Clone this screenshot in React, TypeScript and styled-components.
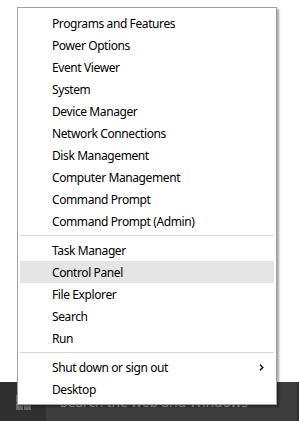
import React from 'react';
import styled, { createGlobalStyle } from 'styled-components';

const GlobalStyle = createGlobalStyle`
  html, body {
    margin: 0;
    padding: 0;
    background: #ffffff;
  }
  body {
    font-family: "Noto Sans", "Liberation Sans", sans-serif;
  }
`;

// #region styled
const Screen = styled.div`
  display: flex;
  flex-direction: column;
  height: 421px;
  overflow: hidden;
  position: relative;
  width: 299px;
`;

const Desk = styled.div`
  background: #ffffff;
  flex-grow: 1;
`;

const Taskbar = styled.div`
  background: #303030;
  display: flex;
  flex-direction: row;
  height: 39px;
`;

const StartButton = styled.div`
  align-items: center;
  box-sizing: border-box;
  display: flex;
  justify-content: center;
  padding-top: 2px;
  width: 46px;
`;

const SearchBox = styled.div`
  align-items: center;
  background: #3d3d3d;
  color: #a8a8a8;
  display: flex;
  flex-grow: 1;
  font-size: 14px;
  letter-spacing: -0.2px;
  margin-right: 2px;
  overflow: hidden;
  padding-left: 14px;
  white-space: nowrap;
`;

const Menu = styled.div`
  background: #ffffff;
  border: 1px solid #a0a0a0;
  box-shadow: 2px 2px 2px rgba(0, 0, 0, 0.35);
  box-sizing: border-box;
  left: 17px;
  padding: 4px 2px;
  position: absolute;
  top: 7px;
  width: 260px;
`;

const Item = styled.div<{ $active?: boolean }>`
  align-items: center;
  background: ${(p) => (p.$active ? '#e5e5e5' : 'transparent')};
  color: #000000;
  display: flex;
  font-size: 12px;
  height: 22px;
  letter-spacing: -0.4px;
  padding-left: 32px;
  padding-right: 10px;
`;

const Label = styled.span`
  flex-grow: 1;
`;

const Separator = styled.div`
  border-top: 1px solid #d7d7d7;
  margin: 3px 0;
`;
// #endregion

const groups: string[][] = [
  [
    'Programs and Features',
    'Power Options',
    'Event Viewer',
    'System',
    'Device Manager',
    'Network Connections',
    'Disk Management',
    'Computer Management',
    'Command Prompt',
    'Command Prompt (Admin)',
  ],
  ['Task Manager', 'Control Panel', 'File Explorer', 'Search', 'Run'],
  ['Shut down or sign out', 'Desktop'],
];

const Chevron: React.FC = () => (
  <svg width="5" height="7" viewBox="0 0 5 7">
    <path d="M1 0.8 L3.8 3.5 L1 6.2" fill="none" stroke="#000" strokeWidth="1.4" />
  </svg>
);

const WinLogo: React.FC = () => (
  <svg width="15" height="15" viewBox="0 0 15 15" fill="#6a6a6a">
    <rect x="0" y="0" width="7" height="7" />
    <rect x="8" y="0" width="7" height="7" />
    <rect x="0" y="8" width="7" height="7" />
    <rect x="8" y="8" width="7" height="7" />
  </svg>
);

const App: React.FC = () => {
  return (
    <Screen>
      <GlobalStyle />
      <Desk />
      <Taskbar>
        <StartButton>
          <WinLogo />
        </StartButton>
        <SearchBox>Search the web and Windows</SearchBox>
      </Taskbar>
      <Menu>
        {groups.map((group, gi) => (
          <React.Fragment key={gi}>
            {gi > 0 && <Separator />}
            {group.map((name) => (
              <Item key={name} $active={name === 'Control Panel'}>
                <Label>{name}</Label>
                {name === 'Shut down or sign out' && <Chevron />}
              </Item>
            ))}
          </React.Fragment>
        ))}
      </Menu>
    </Screen>
  );
};

export default App;
